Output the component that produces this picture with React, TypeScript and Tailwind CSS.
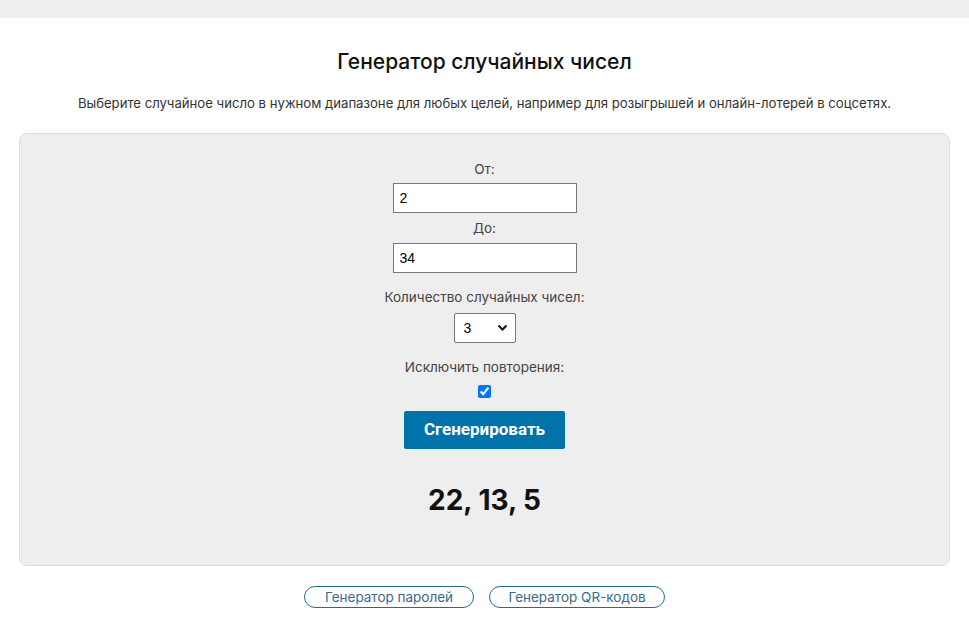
import React, { useState } from 'react';

export default function App() {
  const [from, setFrom] = useState('2');
  const [to, setTo] = useState('34');
  const [count, setCount] = useState('3');
  const [unique, setUnique] = useState(true);
  const [result, setResult] = useState('22, 13, 5');

  const generate = () => {
    const a = parseInt(from, 10);
    const b = parseInt(to, 10);
    const n = parseInt(count, 10);
    const out: number[] = [];
    let guard = 0;
    while (out.length < n && guard < 1000) {
      guard++;
      const v = Math.floor(Math.random() * (b - a + 1)) + a;
      if (unique && out.includes(v)) continue;
      out.push(v);
    }
    setResult(out.join(', '));
  };

  return (
    <div className="min-h-screen bg-white font-[Inter,sans-serif] text-[#222]">
      {/* Top bar */}
      <div className="h-[18px] bg-[#eeeeee]" />

      <div className="px-[19px]">
        <h1 className="mt-[30px] text-center text-[21px] font-medium leading-[28px] text-[#111]">
          Генератор случайных чисел
        </h1>
        <p className="mt-[17px] text-center text-[13.15px] leading-[20px] text-[#333]">
          Выберите случайное число в нужном диапазоне для любых целей, например для розыгрышей и онлайн-лотерей в соцсетях.
        </p>

        {/* Generator panel */}
        <div className="mt-[20px] flex h-[433px] flex-col items-center rounded-[8px] border border-[#dcdcdc] bg-[#eeeeee] pt-[25px]">
          <label className="text-[13.5px] leading-[20px] text-[#444]">От:</label>
          <input
            value={from}
            onChange={(e) => setFrom(e.target.value)}
            className="mt-[4px] h-[30px] w-[184px] border border-[#767676] bg-white px-[6px] font-['Liberation_Sans',Arial,sans-serif] text-[14px] text-black outline-none"
          />
          <label className="mt-[4px] text-[13.5px] leading-[22px] text-[#444]">До:</label>
          <input
            value={to}
            onChange={(e) => setTo(e.target.value)}
            className="mt-[4px] h-[30px] w-[184px] border border-[#767676] bg-white px-[6px] font-['Liberation_Sans',Arial,sans-serif] text-[14px] text-black outline-none"
          />
          <label className="mt-[13px] text-[13.5px] leading-[22px] text-[#444]">Количество случайных чисел:</label>
          <div className="relative mt-[5px]">
            <select
              value={count}
              onChange={(e) => setCount(e.target.value)}
              className="h-[30px] w-[62px] appearance-none rounded-[2px] border border-[#767676] bg-white pl-[9px] font-['Liberation_Sans',Arial,sans-serif] text-[14px] text-black outline-none"
            >
              {[1, 2, 3, 4, 5, 6, 7, 8, 9, 10].map((n) => (
                <option key={n} value={n}>{n}</option>
              ))}
            </select>
            <svg className="pointer-events-none absolute right-[8px] top-[11px]" width="11" height="8" viewBox="0 0 11 8">
              <path d="M1.5 1.5 L5.5 5.5 L9.5 1.5" fill="none" stroke="#111" strokeWidth="2" />
            </svg>
          </div>
          <label className="mt-[13px] text-[13.5px] leading-[22px] text-[#444]">Исключить повторения:</label>
          <input
            type="checkbox"
            checked={unique}
            onChange={(e) => setUnique(e.target.checked)}
            className="mt-[7px] h-[13px] w-[13px] accent-[#0075ff]"
          />
          <button
            onClick={generate}
            className="mt-[13px] h-[38px] w-[161px] rounded-[2px] bg-[#0073aa] font-['Roboto',sans-serif] text-[17px] font-bold text-white"
          >
            Сгенерировать
          </button>
          <div className="mt-[33px] text-[28px] font-bold leading-[36px] text-[#111]">{result}</div>
        </div>

        {/* Links */}
        <div className="mt-[20px] flex justify-center gap-[15px]">
          <a className="flex h-[22px] w-[170px] items-center justify-center rounded-full border border-[#1f6e99] text-[13.5px] text-[#3b6a8a]">
            Генератор паролей
          </a>
          <a className="flex h-[22px] w-[176px] items-center justify-center rounded-full border border-[#1f6e99] text-[13.5px] text-[#3b6a8a]">
            Генератор QR-кодов
          </a>
        </div>
      </div>
    </div>
  );
}
